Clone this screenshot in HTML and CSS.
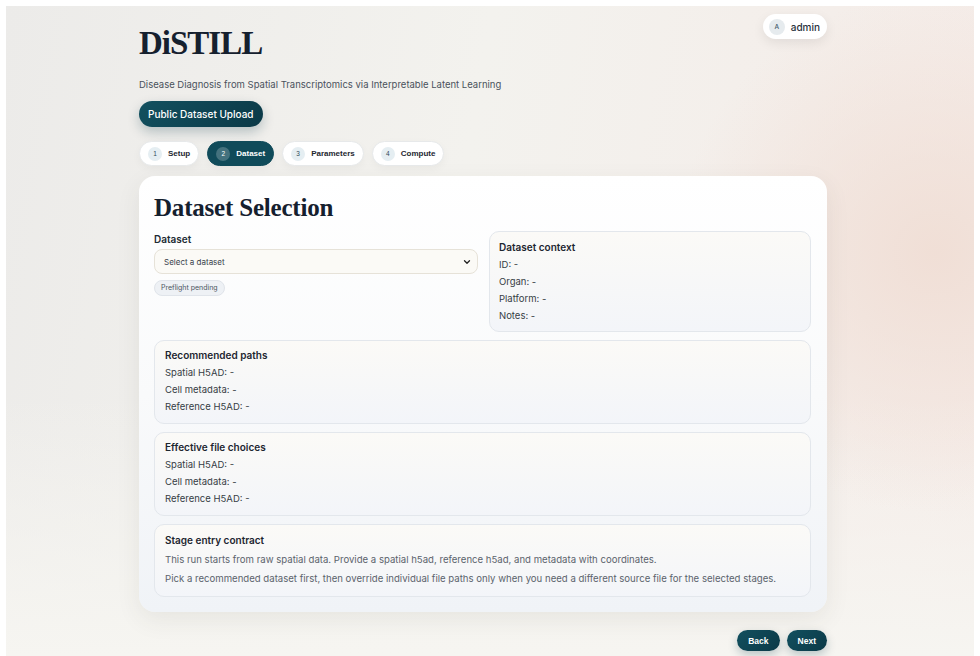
FILE: index.html
```html
<!DOCTYPE html>
<html>
<head>
    <title>DiSTILL - Dataset Selection</title>
    <link rel="stylesheet" href="styles.css">
</head>
<body>
<div class="frame">
    <div class="shell">
        <header class="top">
            <div class="brand">
                <h1 class="logo">DiSTILL</h1>
                <p class="tagline">Disease Diagnosis from Spatial Transcriptomics via Interpretable Latent Learning</p>
                <button class="btn-upload">Public Dataset Upload</button>
            </div>
            <div class="user-pill"><span class="avatar">A</span>admin</div>
        </header>

        <nav class="steps">
            <div class="step"><span class="num">1</span>Setup</div>
            <div class="step active"><span class="num">2</span>Dataset</div>
            <div class="step"><span class="num">3</span>Parameters</div>
            <div class="step"><span class="num">4</span>Compute</div>
        </nav>

        <section class="card">
            <h2 class="card-title">Dataset Selection</h2>
            <div class="top-grid">
                <div class="field">
                    <label class="field-label">Dataset</label>
                    <div class="select">
                        <span>Select a dataset</span>
                        <svg width="8" height="8" viewBox="0 0 8 8"><path d="M1.5 2.8 L4 5.3 L6.5 2.8" fill="none" stroke="#222" stroke-width="1.3" stroke-linecap="round" stroke-linejoin="round"/></svg>
                    </div>
                    <span class="chip">Preflight pending</span>
                </div>
                <div class="box context">
                    <div class="box-title">Dataset context</div>
                    <div class="line">ID: -</div>
                    <div class="line">Organ: -</div>
                    <div class="line">Platform: -</div>
                    <div class="line">Notes: -</div>
                </div>
            </div>

            <div class="box">
                <div class="box-title">Recommended paths</div>
                <div class="line">Spatial H5AD: -</div>
                <div class="line">Cell metadata: -</div>
                <div class="line">Reference H5AD: -</div>
            </div>

            <div class="box">
                <div class="box-title">Effective file choices</div>
                <div class="line">Spatial H5AD: -</div>
                <div class="line">Cell metadata: -</div>
                <div class="line">Reference H5AD: -</div>
            </div>

            <div class="box contract">
                <div class="box-title">Stage entry contract</div>
                <p class="note">This run starts from raw spatial data. Provide a spatial h5ad, reference h5ad, and metadata with coordinates.</p>
                <p class="note">Pick a recommended dataset first, then override individual file paths only when you need a different source file for the selected stages.</p>
            </div>
        </section>

        <div class="actions">
            <button class="btn-nav">Back</button>
            <button class="btn-nav">Next</button>
        </div>
    </div>
</div>
</body>
</html>
```

FILE: styles.css
```css
html {
    background: #fff;
}
body {
    margin: 0;
    font-family: 'Inter', 'Noto Sans', sans-serif;
    color: #1f2933;
}
.frame {
    margin: 6px 6px 0;
    height: 650px;
    overflow: hidden;
    background:
        radial-gradient(circle at 96% 38%, rgba(240, 222, 213, 0.95) 0, rgba(240, 222, 213, 0) 260px),
        linear-gradient(180deg, rgba(246, 245, 241, 0) 60%, #f6f5f1 100%),
        linear-gradient(100deg, #ecebe9 0%, #f3f2ee 45%, #f5ebe7 100%);
}
.shell {
    width: 688px;
    margin-left: 133px;
    padding-top: 8px;
}
.top {
    display: flex;
    justify-content: space-between;
    align-items: flex-start;
}
.logo {
    margin: 11px 0 0;
    font-family: 'Liberation Serif', serif;
    font-weight: bold;
    font-size: 33px;
    line-height: 36px;
    letter-spacing: -1px;
    color: #15202e;
}
.tagline {
    margin: 17px 0 0;
    font-size: 9.5px;
    line-height: 14px;
    color: #4a525c;
}
.btn-upload {
    margin-top: 9px;
    height: 26px;
    padding: 0 9px;
    border: none;
    border-radius: 13px;
    background: linear-gradient(135deg, #12505f, #0b3947);
    color: #fff;
    font-family: 'Inter', sans-serif;
    font-weight: 500;
    font-size: 10px;
    box-shadow: 0 5px 12px rgba(11, 57, 71, 0.25);
}
.user-pill {
    display: flex;
    align-items: center;
    gap: 6px;
    height: 25px;
    padding: 0 7px 0 6px;
    background: #fff;
    border-radius: 13px;
    font-size: 10px;
    font-weight: 500;
    color: #27313b;
    box-shadow: 0 4px 12px rgba(0, 0, 0, 0.08);
}
.avatar {
    width: 16px;
    height: 16px;
    border-radius: 50%;
    background: #e6ebee;
    color: #3e5766;
    font-size: 6.5px;
    display: flex;
    align-items: center;
    justify-content: center;
}
.steps {
    display: flex;
    gap: 8px;
    margin-top: 14px;
}
.step {
    display: flex;
    align-items: center;
    gap: 6px;
    height: 23px;
    padding: 0 8px;
    background: #fff;
    border: 1px solid #e7e9ea;
    border-radius: 13px;
    font-family: 'Liberation Sans', Arial, sans-serif;
    font-weight: bold;
    font-size: 8px;
    color: #1e2730;
    box-shadow: 0 3px 8px rgba(0, 0, 0, 0.04);
}
.step .num {
    width: 14px;
    height: 14px;
    border-radius: 50%;
    background: #e5eef2;
    color: #2f4a58;
    font-size: 6.5px;
    font-weight: normal;
    display: flex;
    align-items: center;
    justify-content: center;
}
.step.active {
    background: #104b5a;
    border-color: #104b5a;
    color: #fff;
}
.step.active .num {
    background: rgba(255, 255, 255, 0.22);
    color: #fff;
}
.card {
    margin-top: 10px;
    padding: 17px 16px 15px 15px;
    background: linear-gradient(180deg, #ffffff 0%, #f9fafb 50%, #f0f3f7 100%);
    border-radius: 16px;
    box-shadow: 0 8px 24px rgba(60, 60, 50, 0.08);
    display: flex;
    flex-direction: column;
    gap: 8px;
}
.card-title {
    margin: 0;
    font-family: 'Liberation Serif', serif;
    font-weight: bold;
    font-size: 25px;
    line-height: 30px;
    letter-spacing: -0.2px;
    color: #15202e;
}
.top-grid {
    display: grid;
    grid-template-columns: 324px 1fr;
    gap: 11px;
}
.field-label {
    display: block;
    margin-top: 1px;
    font-size: 10px;
    font-weight: 600;
    line-height: 14px;
    color: #222b34;
}
.select {
    margin-top: 3px;
    height: 23px;
    display: flex;
    align-items: center;
    justify-content: space-between;
    padding: 0 6px 0 9px;
    background: #fbfaf6;
    border: 1px solid #e6e2d8;
    border-radius: 8px;
    font-size: 8px;
    color: #3a424b;
}
.chip {
    display: inline-block;
    margin-top: 5px;
    padding: 0 6px;
    height: 14px;
    line-height: 14px;
    background: #eef1f5;
    border: 1px solid #e0e4ea;
    border-radius: 8px;
    font-size: 7px;
    color: #4c5560;
}
.box {
    padding: 6px 10px 8px;
    background: linear-gradient(180deg, #fbfaf7 0%, #f3f5f9 100%);
    border: 1px solid #e3e7ec;
    border-radius: 10px;
}
.box.context {
    padding: 7px 9px 7px;
}
.box-title {
    font-size: 10px;
    font-weight: 600;
    line-height: 17px;
    color: #1d2630;
}
.line {
    font-size: 9.5px;
    line-height: 17px;
    color: #363d45;
}
.contract {
    padding: 7px 10px 9px;
}
.note {
    margin: 2px 0 0;
    font-size: 9.6px;
    line-height: 17px;
    color: #5b636c;
}
.actions {
    display: flex;
    justify-content: flex-end;
    gap: 7px;
    margin-top: 18px;
}
.btn-nav {
    height: 21px;
    padding: 0 11px;
    border: none;
    border-radius: 11px;
    background: linear-gradient(135deg, #12505f, #0b3947);
    color: #fff;
    font-family: 'Liberation Sans', Arial, sans-serif;
    font-weight: bold;
    font-size: 8.5px;
    box-shadow: 0 4px 10px rgba(11, 57, 71, 0.25);
}
```
